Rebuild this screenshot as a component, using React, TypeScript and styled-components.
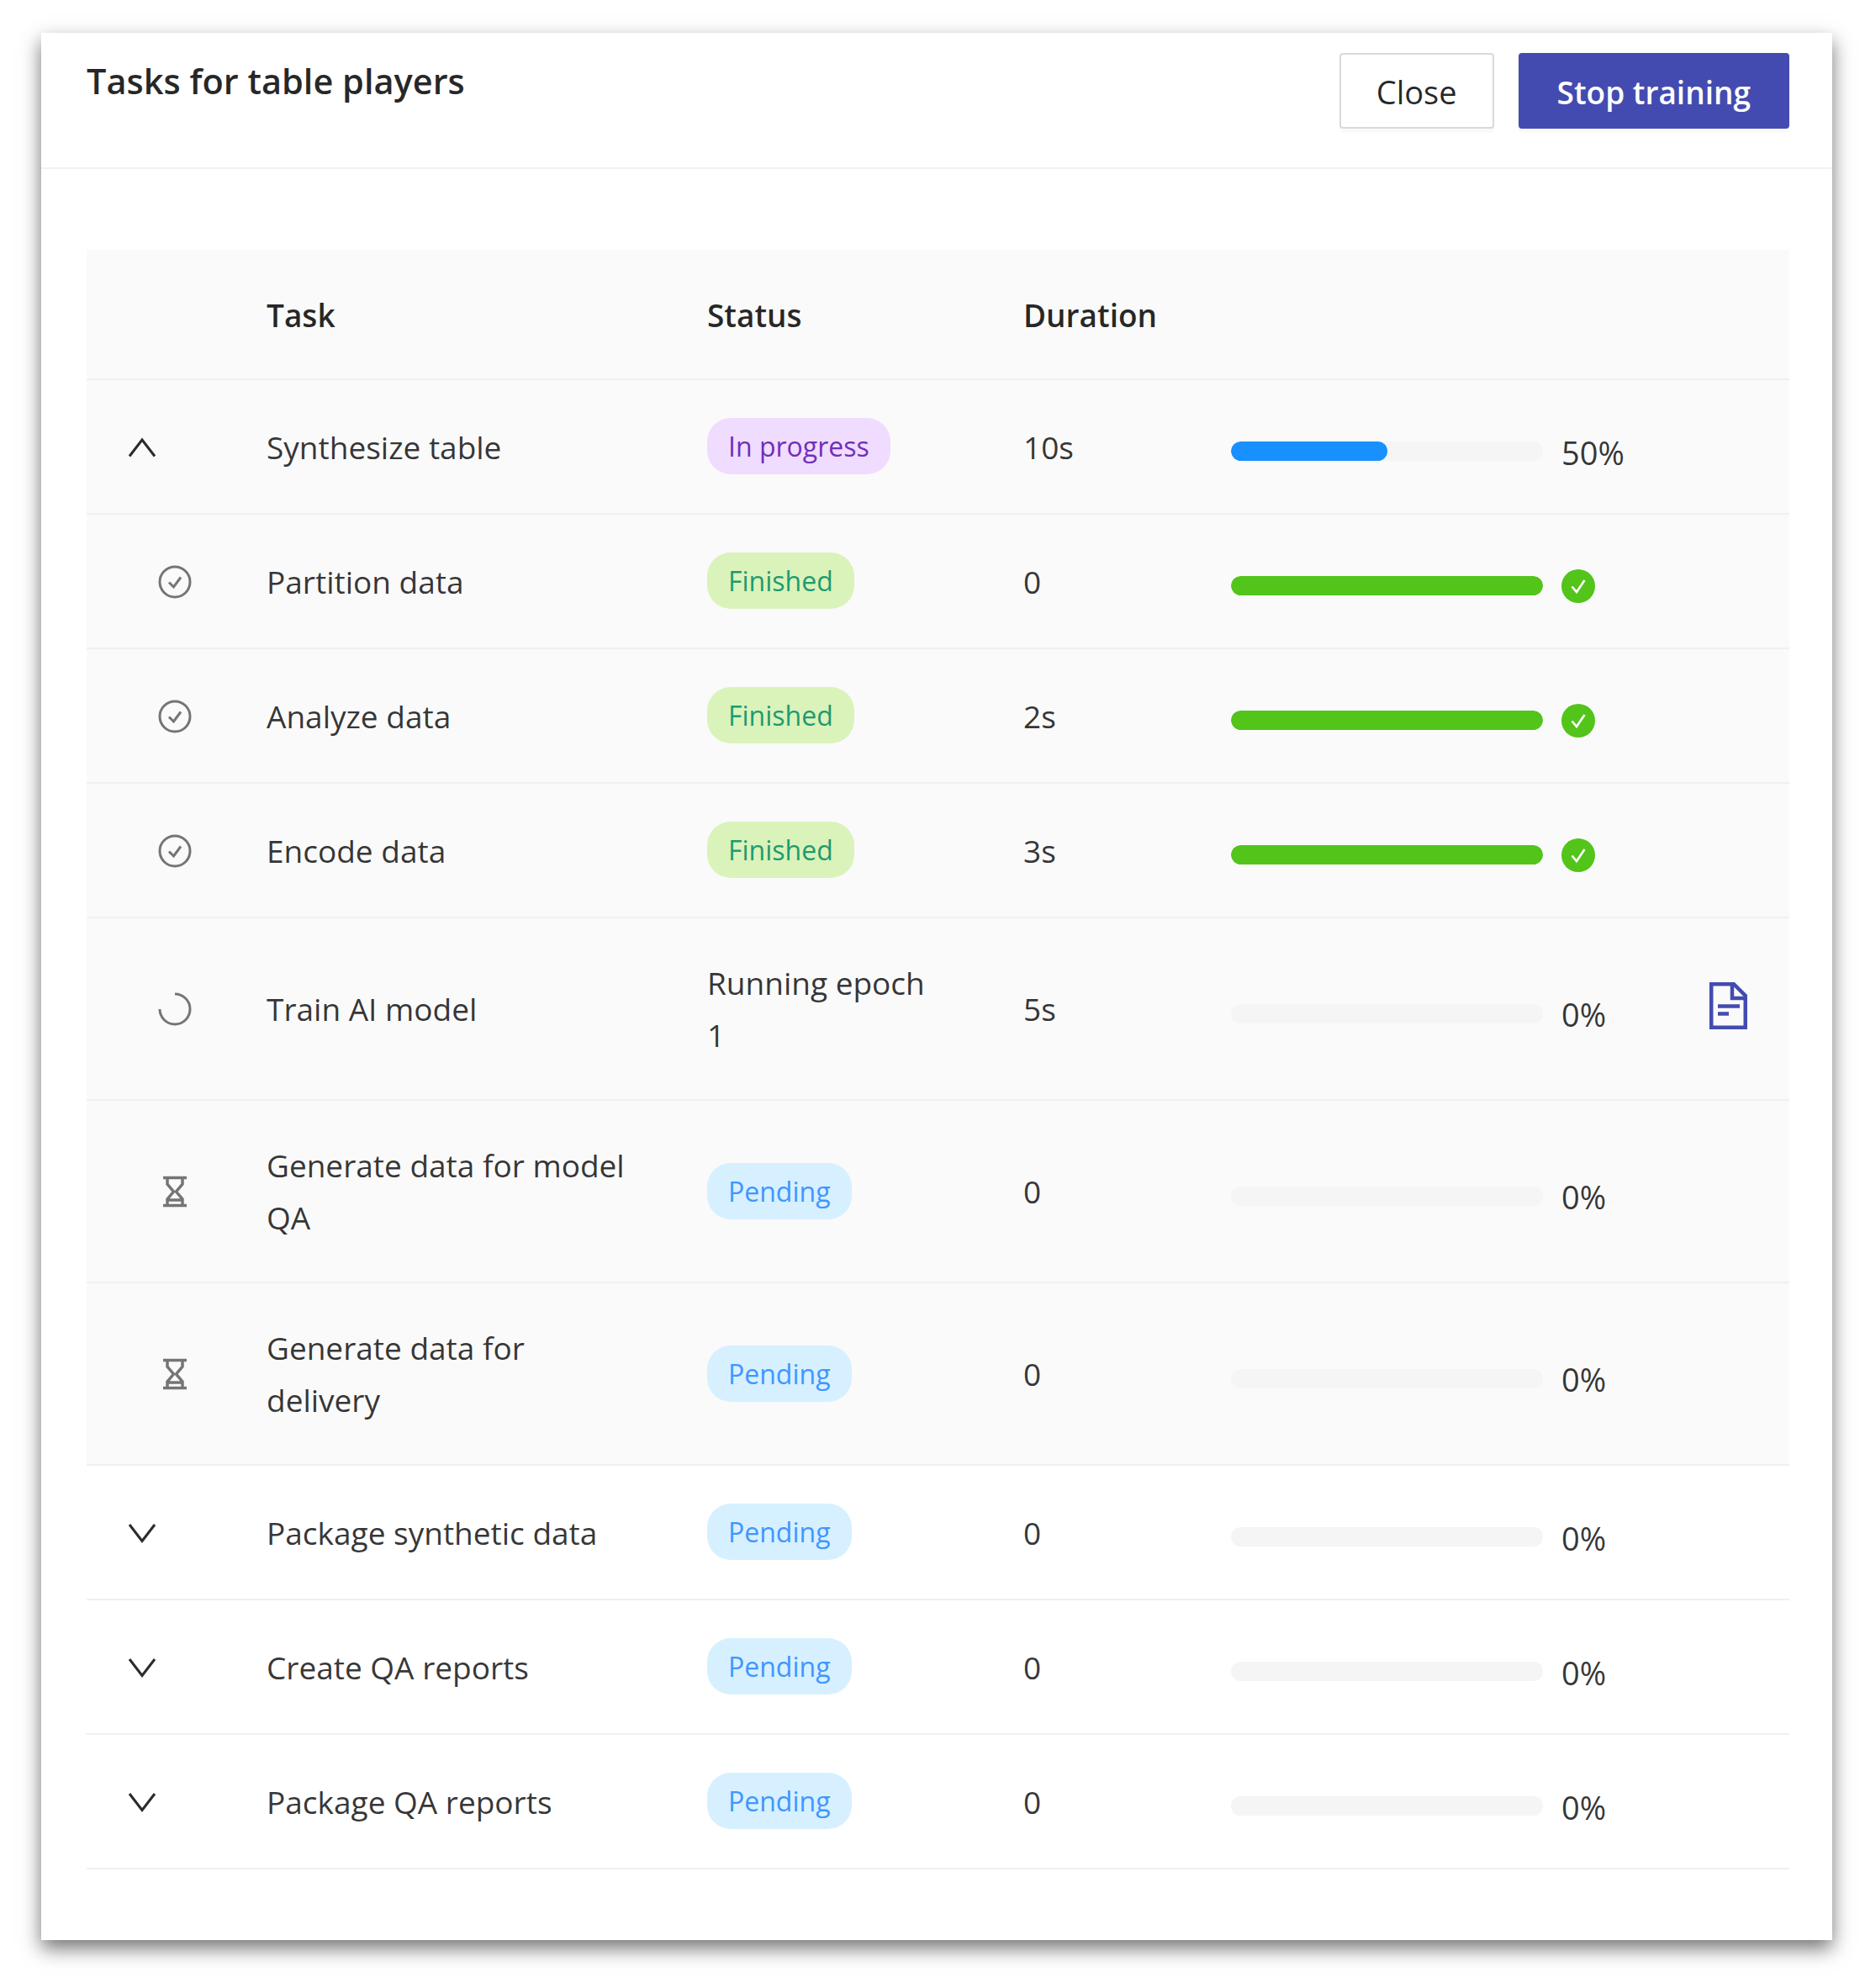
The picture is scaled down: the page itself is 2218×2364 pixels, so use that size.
import styled, { createGlobalStyle } from 'styled-components';

type Tone = 'progress' | 'done' | 'pending';
type Lead = 'up' | 'down' | 'check' | 'spin' | 'wait';

type TaskRow = {
  lead: Lead;
  name: string;
  status: string;
  tone?: Tone;
  duration: string;
  percent: number;
  report?: boolean;
  plain?: boolean;
};

const rows: TaskRow[] = [
  { lead: 'up', name: 'Synthesize table', status: 'In progress', tone: 'progress', duration: '10s', percent: 50 },
  { lead: 'check', name: 'Partition data', status: 'Finished', tone: 'done', duration: '0', percent: 100 },
  { lead: 'check', name: 'Analyze data', status: 'Finished', tone: 'done', duration: '2s', percent: 100 },
  { lead: 'check', name: 'Encode data', status: 'Finished', tone: 'done', duration: '3s', percent: 100 },
  { lead: 'spin', name: 'Train AI model', status: 'Running epoch 1', duration: '5s', percent: 0, report: true },
  { lead: 'wait', name: 'Generate data for model QA', status: 'Pending', tone: 'pending', duration: '0', percent: 0 },
  { lead: 'wait', name: 'Generate data for delivery', status: 'Pending', tone: 'pending', duration: '0', percent: 0 },
  { lead: 'down', name: 'Package synthetic data', status: 'Pending', tone: 'pending', duration: '0', percent: 0, plain: true },
  { lead: 'down', name: 'Create QA reports', status: 'Pending', tone: 'pending', duration: '0', percent: 0, plain: true },
  { lead: 'down', name: 'Package QA reports', status: 'Pending', tone: 'pending', duration: '0', percent: 0, plain: true },
];

const LeadIcon = ({ kind }: { kind: Lead }) => {
  if (kind === 'up' || kind === 'down') {
    return (
      <Chevron viewBox="0 0 34 24" fill="none" stroke="#2b2b2b" strokeWidth="3">
        <path d={kind === 'up' ? 'M2 22.5 17 3 32 22.5' : 'M2 2 17 21.5 32 2'} />
      </Chevron>
    );
  }
  if (kind === 'check') {
    return (
      <StatusIcon viewBox="0 0 40 40" fill="none" stroke="#757575" strokeWidth="3">
        <circle cx="20" cy="20" r="18" />
        <path d="M13 20.5 18.5 26 27 14.5" />
      </StatusIcon>
    );
  }
  if (kind === 'spin') {
    return (
      <StatusIcon viewBox="0 0 40 40" fill="none" stroke="#757575" strokeWidth="3">
        <path d="M20 2A18 18 0 1 1 2 20" />
      </StatusIcon>
    );
  }
  return (
    <StatusIcon viewBox="0 0 40 40" fill="none" stroke="#757575" strokeWidth="3.5">
      <path d="M6 3.500H34M6 36.500H34M11 3.500V11L18.500 20 11 29V36.500M29 3.500V11L21.500 20 29 29V36.500M11 30H29" />
    </StatusIcon>
  );
};

const App = () => {
  return (
    <>
      <GlobalStyle />
      <Panel>
        <Header>
          <Title>Tasks for table players</Title>
          <Actions>
            <Button>Close</Button>
            <Button $primary>Stop training</Button>
          </Actions>
        </Header>
        <Body>
          <HeadRow>
            <span />
            <HeadCell>Task</HeadCell>
            <HeadCell>Status</HeadCell>
            <HeadCell>Duration</HeadCell>
          </HeadRow>
          {rows.map((row) => (
            <Row key={row.name} $plain={row.plain}>
              <LeadCell $indent={row.lead !== 'up' && row.lead !== 'down'}>
                <LeadIcon kind={row.lead} />
              </LeadCell>
              <NameCell>{row.name}</NameCell>
              <div>
                {row.tone ? (
                  <Pill $tone={row.tone}>{row.status}</Pill>
                ) : (
                  <StatusText>{row.status}</StatusText>
                )}
              </div>
              <div>{row.duration}</div>
              <ProgressCell>
                <Track>
                  <Fill
                    $done={row.percent === 100}
                    style={{ width: `${row.percent}%` }}
                  />
                </Track>
                {row.percent === 100 ? (
                  <DoneBadge viewBox="0 0 40 40">
                    <circle cx="20" cy="20" r="20" fill="#52c41a" />
                    <path d="M12.500 20.500 18 27 27.500 13" fill="none" stroke="#fff" strokeWidth="2.600" />
                  </DoneBadge>
                ) : (
                  <Percent>{row.percent}%</Percent>
                )}
              </ProgressCell>
              <ActionCell>
                {row.report && (
                  <ReportIcon viewBox="0 0 45 56" fill="none" stroke="#444bb0" strokeWidth="4.500">
                    <path d="M2.250 2.250H29L42.750 16V53.750H2.250Z" />
                    <path d="M27 2V19H43M10 28.500H36M10 37.500H23" />
                  </ReportIcon>
                )}
              </ActionCell>
            </Row>
          ))}
        </Body>
      </Panel>
    </>
  );
};

const GlobalStyle = createGlobalStyle`
  html, body {
    margin: 0;
    background: #fff;
  }
  body {
    font-family: 'Open Sans', 'Noto Sans', sans-serif;
    font-size: 37px;
    color: rgba(0, 0, 0, 0.8);
  }
  #root {
    min-height: 2364px;
    padding: 39px 39px 0 49px;
    box-sizing: border-box;
  }
`;

const Panel = styled.div`
  width: 2130px;
  height: 2268px;
  background: #fff;
  box-shadow: 0 10px 22px rgba(0, 0, 0, 0.55);
`;

const Header = styled.header`
  height: 162px;
  box-sizing: border-box;
  padding: 23px 51px 0 54px;
  display: flex;
  justify-content: space-between;
  align-items: flex-start;
  border-bottom: 2px solid #f2f2f2;
`;

const Title = styled.h1`
  margin: 0;
  font-size: 41.500px;
  line-height: 68px;
  font-weight: 600;
  color: rgba(0, 0, 0, 0.85);
`;

const Actions = styled.div`
  display: flex;
  gap: 29px;
`;

const Button = styled.button<{ $primary?: boolean }>`
  height: 90px;
  padding: 2px ${(p) => (p.$primary ? 44 : 42)}px 0;
  margin-top: 1px;
  font: inherit;
  font-size: ${(p) => (p.$primary ? 37 : 38)}px;
  font-weight: ${(p) => (p.$primary ? 600 : 500)};
  color: ${(p) => (p.$primary ? '#fff' : 'rgba(0, 0, 0, 0.85)')};
  background: ${(p) => (p.$primary ? '#444bb0' : '#fff')};
  border: 2px solid ${(p) => (p.$primary ? '#444bb0' : '#d9d9d9')};
  border-radius: 4px;
  box-shadow: 0 5px 0 rgba(0, 0, 0, 0.02);
`;

const Body = styled.div`
  margin-top: 96px;
  padding: 0 51px 0 54px;
`;

const columns = '214px 524px 376px 247px 546px 1fr';

const HeadRow = styled.div`
  display: grid;
  grid-template-columns: ${columns};
  align-items: center;
  height: 155px;
  box-sizing: border-box;
  padding-top: 2px;
  background: #fafafa;
  border-bottom: 2px solid #f0f0f0;
`;

const HeadCell = styled.div`
  font-weight: 600;
  color: rgba(0, 0, 0, 0.85);
`;

const Row = styled.div<{ $plain?: boolean }>`
  display: grid;
  grid-template-columns: ${columns};
  align-items: center;
  min-height: 160px;
  box-sizing: border-box;
  padding-top: 1px;
  line-height: 62px;
  background: ${(p) => (p.$plain ? '#fff' : '#fafafa')};
  border-bottom: 2px solid #f0f0f0;
`;

const LeadCell = styled.div<{ $indent?: boolean }>`
  display: flex;
  padding-left: ${(p) => (p.$indent ? 85 : 49)}px;
`;

const Chevron = styled.svg`
  width: 34px;
  height: 24px;
`;

const StatusIcon = styled.svg`
  width: 40px;
  height: 40px;
`;

const NameCell = styled.div`
  padding: 45px 84px 45px 0;
`;

const StatusText = styled.div`
  max-width: 275px;
  padding: 45px 0;
`;

const toneStyles = {
  progress: { bg: '#f0dcff', fg: '#7030b8' },
  done: { bg: '#d9f3bb', fg: '#1f9a6e' },
  pending: { bg: '#d6f0ff', fg: '#4096ff' },
};

const Pill = styled.div<{ $tone: Tone }>`
  width: fit-content;
  height: 67px;
  line-height: 67px;
  padding: 0 25px;
  margin-bottom: 2px;
  white-space: nowrap;
  font-size: 32px;
  border-radius: 28px;
  background: ${(p) => toneStyles[p.$tone].bg};
  color: ${(p) => toneStyles[p.$tone].fg};
`;

const ProgressCell = styled.div`
  display: flex;
  align-items: center;
  gap: 22px;
  padding-top: 10px;
`;

const Track = styled.div`
  width: 371px;
  height: 23px;
  border-radius: 12px;
  background: #f5f5f5;
  overflow: hidden;
`;

const Fill = styled.div<{ $done: boolean }>`
  height: 100%;
  border-radius: 12px;
  background: ${(p) => (p.$done ? '#52c41a' : '#1890ff')};
`;

const DoneBadge = styled.svg`
  width: 40px;
  height: 40px;
`;

const Percent = styled.span`
  font-size: 38px;
  padding-top: 2px;
`;

const ActionCell = styled.div`
  display: flex;
  justify-content: flex-end;
  padding: 0 50px 8px 0;
`;

const ReportIcon = styled.svg`
  width: 45px;
  height: 56px;
`;

export default App;
